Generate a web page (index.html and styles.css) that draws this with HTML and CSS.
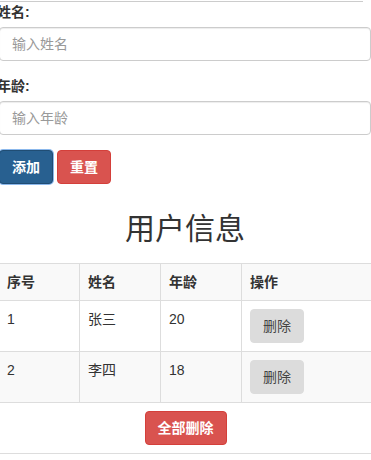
FILE: index.html
```html
<!DOCTYPE html>
<html lang="zh-CN">
    <head>
        <meta charset="UTF-8">
        <meta name="viewport" content="width=device-width, initial-scale=1.0">
        <title>用户信息</title>
        <link rel="stylesheet" href="styles.css">
    </head>
<body>
    <div class="top-rule"></div>
    <div class="wrapper">
        <form id="userForm">
            <div class="form-group">
                <label for="username">姓名:</label>
                <input type="text" id="username" class="form-control" placeholder="输入姓名">
            </div>
            <div class="form-group">
                <label for="age">年龄:</label>
                <input type="text" id="age" class="form-control" placeholder="输入年龄">
            </div>
            <div class="form-actions">
                <button type="button" class="btn btn-primary">添加</button>
                <button type="reset" class="btn btn-danger">重置</button>
            </div>
        </form>

        <h2 class="title">用户信息</h2>

        <table class="user-table">
            <colgroup>
                <col class="col-id">
                <col class="col-name">
                <col class="col-age">
                <col>
            </colgroup>
            <thead>
                <tr>
                    <th>序号</th>
                    <th>姓名</th>
                    <th>年龄</th>
                    <th>操作</th>
                </tr>
            </thead>
            <tbody>
                <tr>
                    <td>1</td>
                    <td>张三</td>
                    <td>20</td>
                    <td><button type="button" class="btn btn-default">删除</button></td>
                </tr>
                <tr class="striped">
                    <td>2</td>
                    <td>李四</td>
                    <td>18</td>
                    <td><button type="button" class="btn btn-default">删除</button></td>
                </tr>
            </tbody>
            <tfoot>
                <tr>
                    <td colspan="4" class="foot-cell">
                        <button type="button" class="btn btn-danger">全部删除</button>
                    </td>
                </tr>
            </tfoot>
        </table>
    </div>
</body>
</html>
```

FILE: styles.css
```css
body {
    margin: 0;
    padding: 0;
    font-family: "Liberation Sans", "Noto Sans CJK SC", sans-serif;
    font-size: 14px;
    line-height: 20px;
    color: #333;
    background-color: #fff;
    overflow: hidden;
}
.top-rule {
    width: 363px;
    margin-top: 1px;
    border-top: 1px solid #ccc;
}
.wrapper {
    width: 372px;
    margin-left: -1px;
}
.form-group {
    margin-bottom: 15px;
}
label {
    display: block;
    margin: 0 0 5px -2px;
    font-weight: bold;
}
.form-control {
    display: block;
    width: 100%;
    height: 34px;
    padding: 6px 12px;
    border: 1px solid #ccc;
    border-radius: 4px;
    box-shadow: inset 0 1px 1px rgba(0, 0, 0, 0.075);
    font-family: inherit;
    font-size: 14px;
    color: #555;
    box-sizing: border-box;
}
.form-control::placeholder {
    color: #999;
}
.form-actions {
    display: flex;
    gap: 4px;
}
.btn {
    height: 34px;
    padding: 6px 12px;
    border: 1px solid transparent;
    border-radius: 4px;
    font-family: inherit;
    font-size: 14px;
    line-height: 20px;
    cursor: pointer;
    box-sizing: border-box;
}
.btn-primary {
    background-color: #286090;
    border-color: #204d74;
    color: #fff;
    font-weight: bold;
    box-shadow: 0 0 0 1px #8bb8ec;
}
.btn-danger {
    background-color: #d9534f;
    border-color: #d43f3a;
    color: #fff;
    font-weight: bold;
}
.btn-default {
    background-color: #dcdcdc;
    border-color: #dcdcdc;
    color: #444;
}
.title {
    margin: 28px 0 18px;
    font-size: 30px;
    line-height: 33px;
    font-weight: normal;
    text-align: center;
}
.user-table {
    width: 375px;
    margin-left: -1px;
    border-collapse: collapse;
    table-layout: fixed;
}
.user-table th,
.user-table td {
    padding: 8px;
    border: 1px solid #ddd;
    text-align: left;
    vertical-align: top;
}
.user-table thead th {
    background-color: #f9f9f9;
    font-weight: bold;
}
.col-id,
.col-name,
.col-age {
    width: 81px;
}
.user-table .striped td {
    background-color: #f9f9f9;
}
.user-table .foot-cell {
    text-align: center;
}
```
